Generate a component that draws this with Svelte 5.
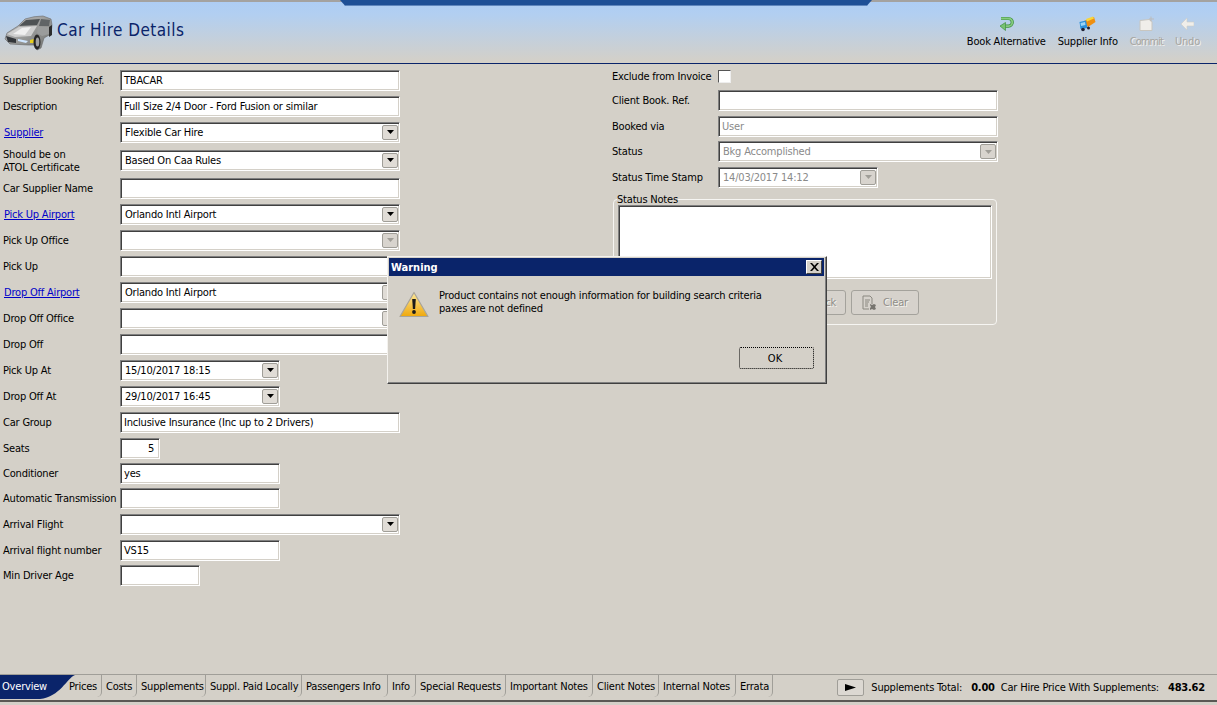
<script>
  const leftRows = [
    { label: 'Supplier Booking Ref.', value: 'TBACAR', size: 'full' },
    { label: 'Description', value: 'Full Size 2/4 Door - Ford Fusion or similar', size: 'full' },
    { label: 'Supplier', link: true, value: 'Flexible Car Hire', size: 'full', combo: true },
    { label: 'Should be on\nATOL Certificate', two: true, value: 'Based On Caa Rules', size: 'full', combo: true },
    { label: 'Car Supplier Name', value: '', size: 'full' },
    { label: 'Pick Up Airport', link: true, value: 'Orlando Intl Airport', size: 'full', combo: true },
    { label: 'Pick Up Office', value: '', size: 'full', combo: true, disabledBtn: true },
    { label: 'Pick Up', value: '', size: 'full' },
    { label: 'Drop Off Airport', link: true, value: 'Orlando Intl Airport', size: 'full', combo: true },
    { label: 'Drop Off Office', value: '', size: 'full', combo: true },
    { label: 'Drop Off', value: '', size: 'full' },
    { label: 'Pick Up At', value: '15/10/2017 18:15', size: 'mid', combo: true },
    { label: 'Drop Off At', value: '29/10/2017 16:45', size: 'mid', combo: true },
    { label: 'Car Group', value: 'Inclusive Insurance (Inc up to 2 Drivers)', size: 'full' },
    { label: 'Seats', value: '5', size: 'tiny', right: true },
    { label: 'Conditioner', value: 'yes', size: 'mid' },
    { label: 'Automatic Transmission', value: '', size: 'mid' },
    { label: 'Arrival Flight', value: '', size: 'full', combo: true },
    { label: 'Arrival flight number', value: 'VS15', size: 'mid' },
    { label: 'Min Driver Age', value: '', size: 'small' }
  ];
  const rightRows = [
    { label: 'Client Book. Ref.', value: '', size: 'full' },
    { label: 'Booked via', value: 'User', size: 'full', disabled: true },
    { label: 'Status', value: 'Bkg Accomplished', size: 'full', combo: true, disabled: true },
    { label: 'Status Time Stamp', value: '14/03/2017 14:12', size: 'mid', combo: true, disabled: true }
  ];
  const tabs = ['Prices', 'Costs', 'Supplements', 'Suppl. Paid Locally', 'Passengers Info', 'Info', 'Special Requests', 'Important Notes', 'Client Notes', 'Internal Notes', 'Errata'];
</script>

{#snippet field(r)}
  <div class="field {r.size}" class:dis={r.disabled}>
    <span class="val" class:right={r.right} class:cval={r.combo}>{r.value}</span>
    {#if r.combo}
      <span class="drop" class:off={r.disabled || r.disabledBtn}><svg width="7" height="4" viewBox="0 0 7 4"><path d="M0 0h7L3.5 4z" fill="currentColor" /></svg></span>
    {/if}
  </div>
{/snippet}

<div class="window">
  <header class="head">
    <div class="tabnotch"></div>
    <div class="brand">
      <svg class="car" width="50" height="36" viewBox="0 0 50 36">
        <defs>
          <linearGradient id="cb" x1="0" y1="0" x2="1" y2="1"><stop offset="0" stop-color="#c4c4c4" /><stop offset="1" stop-color="#6e706e" /></linearGradient>
        </defs>
        <path d="M1 24 L3 18 L14 11 L21 4 Q30 1 39 1 L47 4 L48 10 L47 19 L40 23 L37 33 L33 35 L30 30 L24 30 L6 29z" fill="url(#cb)" stroke="#666" stroke-width=".6" />
        <path d="M15 11 L22 5 L36 4 L33 10z" fill="#4e5254" />
        <path d="M37 4 L46 5 L45 11 L35 11z" fill="#606466" />
        <path d="M3 19 L15 12 L33 11 L27 21 L11 22z" fill="#cfcfcf" />
        <path d="M9 19 L18 13 L27 12 L21 20z" fill="#efefef" />
        <path d="M34 12 L46 12 L45 19 L38 21 L33 18z" fill="#9a9c9c" />
        <path d="M2 21 L12 24 L12 28 L4 27z" fill="#33363a" />
        <path d="M14 24 L24 26 L22 28 L14 26z" fill="#cfe6ff" />
        <path d="M26 25 L30 24 L30 28 L26 28z" fill="#e8d020" />
        <ellipse cx="33" cy="27" rx="3.5" ry="7.5" fill="#262626" />
        <ellipse cx="33.5" cy="27" rx="1.8" ry="4.5" fill="#a2a2a2" />
        <path d="M45 12 L48 10 L48 20 L45 22z" fill="#2c2c2c" />
      </svg>
      <h1>Car Hire Details</h1>
    </div>
    <div class="tools">
      <div class="tool">
        <svg width="16" height="16" viewBox="0 0 16 16">
          <path d="M3 2.5h7.5a3.8 3.8 0 0 1 0 7.6H6" fill="none" stroke="#3f8f3f" stroke-width="3.2" />
          <path d="M3 2.5h7.5a3.8 3.8 0 0 1 0 7.6H6" fill="none" stroke="#86cc80" stroke-width="1.8" />
          <path d="M7.5 6.5 L2 10 L7.5 14.5z" fill="#78c272" stroke="#3f8f3f" stroke-width=".7" />
        </svg>
        <span>Book Alternative</span>
      </div>
      <div class="tool">
        <svg width="17" height="16" viewBox="0 0 17 16">
          <path d="M5 5 L15 1 L16.5 6 L9 11z" fill="#ef8f10" />
          <path d="M7 3 L14 0.5 L15 2.5 L8 5.5z" fill="#f8d63c" />
          <path d="M0.5 6 L7 4.5 L8.5 12 L1.5 13z" fill="#2a8fd8" />
          <path d="M1.5 7 L6 6 L6.5 9 L2 10z" fill="#9ad4f5" />
          <circle cx="4" cy="13.5" r="1.8" fill="#223" />
          <circle cx="9.5" cy="12" r="1.5" fill="#223" />
        </svg>
        <span>Supplier Info</span>
      </div>
      <div class="tool off commit">
        <svg width="15" height="15" viewBox="0 0 15 15"><path d="M1 4 L10 3 L13 5 V14 H1z" fill="#f0eeea" stroke="#c8c6c0" /><path d="M12 0v5M10 2.5h5" stroke="#bbb" /></svg>
        <span>Commit</span>
      </div>
      <div class="tool off">
        <svg width="14" height="14" viewBox="0 0 14 14"><path d="M7 1 L1 7 L7 13 V9 H14 V5 H7z" fill="#f0eeea" stroke="#cfcdc7" stroke-width=".6" /></svg>
        <span>Undo</span>
      </div>
    </div>
  </header>

  <main class="body">
    <section class="left">
      {#each leftRows as r}
        <div class="row">
          {#if r.link}
            <a class="lbl link" href="#top">{r.label}</a>
          {:else}
            <span class="lbl" class:two={r.two}>{r.label}</span>
          {/if}
          {@render field(r)}
        </div>
      {/each}
    </section>

    <section class="right">
      <div class="rrows">
        <div class="row">
          <span class="lbl">Exclude from Invoice</span>
          <span class="check"></span>
        </div>
        {#each rightRows as r}
          <div class="row">
            <span class="lbl">{r.label}</span>
            {@render field(r)}
          </div>
        {/each}
      </div>
      <fieldset class="group">
        <legend>Status Notes</legend>
        <div class="notes"></div>
        <div class="btns">
          <button class="btn" disabled>Check</button>
          <button class="btn clear" disabled>
            <svg width="16" height="16" viewBox="0 0 16 16"><path d="M2 1h7l2 2v6M2 1v13h6" fill="none" stroke="#8a8880" /><path d="M4 5h5M4 7h4M4 9h3M4 11h3" stroke="#8a8880" /><path d="M9 9l2 1 2-1 2 1-1 2 1 2-2 1-2-1-2 1 0-2 1-1-1-2z" fill="#77756f" /></svg>
            <span>Clear</span>
          </button>
        </div>
      </fieldset>
    </section>
  </main>

  <footer class="foot">
    <nav class="tabs">
      <div class="tab active">
        <svg width="76" height="25" viewBox="0 0 76 25"><path d="M0 0H75C67 3 60 22 40 24H0z" fill="#0a246a" /></svg>
        <span>Overview</span>
      </div>
      {#each tabs as t}
        <div class="tab">{t}</div>
      {/each}
    </nav>
    <div class="totals">
      <button class="play" aria-label="Run"><svg width="11" height="7" viewBox="0 0 11 7"><path d="M0 0L11 3.5L0 7z" fill="#000" /></svg></button>
      <span class="t1">Supplements Total:</span>
      <b class="t2">0.00</b>
      <span class="t3">Car Hire Price With Supplements:</span>
      <b class="t4">483.62</b>
    </div>
  </footer>

  <div class="dialog" role="dialog">
    <div class="title">
      <span>Warning</span>
      <span class="x"><svg width="9" height="8" viewBox="0 0 9 8"><path d="M0 0h2l2.5 2.8L7 0h2L5.5 4 9 8H7L4.5 5.2 2 8H0l3.5-4z" fill="#000" /></svg></span>
    </div>
    <div class="msg">
      <svg width="30" height="28" viewBox="0 0 30 28">
        <defs><linearGradient id="wy" x1="0" y1="0" x2="0" y2="1"><stop offset="0" stop-color="#fde89a" /><stop offset="1" stop-color="#efa80c" /></linearGradient></defs>
        <path d="M15 1.5 L29 25.5 H1z" fill="url(#wy)" stroke="#a8a49a" stroke-width="1.2" stroke-linejoin="round" />
        <path d="M13.2 8h3.6l-.7 10h-2.2z" fill="#1a1a1a" />
        <circle cx="15" cy="21" r="1.9" fill="#1a1a1a" />
      </svg>
      <p>Product contains not enough information for building search criteria<br />paxes are not defined</p>
    </div>
    <div class="actions"><button class="ok">OK</button></div>
  </div>
</div>

<style>
  :global(body) { margin: 0; background: #d4d0c8; overflow: hidden; }
  .window {
    position: relative; width: 1217px; height: 705px; display: flex; flex-direction: column;
    background: #d4d0c8; font: 11px "DejaVu Sans Condensed", "DejaVu Sans", sans-serif; font-stretch: condensed; color: #000;
    letter-spacing: -.2px; overflow: hidden;
  }
  .head {
    position: relative; height: 61px; flex: none; display: flex; justify-content: space-between;
    border-top: 2px solid #a4a2a0; border-bottom: 1px solid #0a246a;
    background: linear-gradient(#aecdf4 0, #b2cff1 20%, #d4d0c8 98%);
  }
  .tabnotch {
    position: absolute; left: 340px; width: 532px; top: -2px; height: 5px;
    background: #1e4f96; border-bottom: 1px solid #5f86bd;
    clip-path: polygon(0 0, 100% 0, 99% 100%, 1% 100%);
  }
  .brand { display: flex; align-items: center; gap: 3px; padding-left: 4px; }
  h1 { margin: 0 0 6px; font-size: 17px; font-weight: 400; color: #0a246a; letter-spacing: .45px; }
  .tools { display: flex; gap: 12px; padding: 14px 17px 0 0; align-items: flex-start; }
  .tool { display: flex; flex-direction: column; align-items: center; gap: 3px; }
  .tool svg { height: 16px; }
  .tool.off span { color: #a6a49f; text-shadow: 1px 1px #f4f2ee; }
  .tool.commit { letter-spacing: -.95px; }

  .body { flex: 1; display: flex; padding-top: 3px; }
  .left {
    width: 612px; flex: none; display: grid; align-content: start;
    grid-template-rows: 26px 26px 26px 30px 26px 26px 26px 26px 26px 26px 26px 26px 26px 26px 26px 24px 26px 26px 26px 25px;
  }
  .right { flex: 1; display: flex; flex-direction: column; }
  .rrows { display: grid; grid-template-rows: 22px 27px 25px 25px 26px; margin-top: -2px; }
  .row { display: flex; align-items: center; }
  .lbl { white-space: pre-line; line-height: 13px; }
  .left .lbl { width: 120px; padding-left: 3px; box-sizing: border-box; flex: none; }
  .left .lbl.two { padding-top: 2px; }
  .right .lbl { width: 106px; flex: none; }
  .link { color: #0000c8; text-decoration: underline; padding-left: 4px !important; }
  .field {
    position: relative; box-sizing: border-box; height: 21px; display: flex; align-items: center;
    background: #fff; border: 1px solid; border-color: #808080 #fff #fff #808080;
    box-shadow: inset 1px 1px #404040, inset -1px -1px #d4d0c8;
  }
  .full { width: 280px; } .mid { width: 160px; } .small { width: 80px; } .tiny { width: 40px; }
  .val { padding-left: 3px; flex: 1; white-space: nowrap; }
  .val.cval { padding-left: 4px; }
  .val.right { text-align: right; padding-right: 5px; }
  .dis .val { color: #8a8a8a; }
  .drop {
    position: absolute; right: 1px; top: 2px; width: 16px; height: 15px; display: flex;
    align-items: center; justify-content: center; box-sizing: border-box;
    background: #e0dcd6; border: 1px solid #a09e98; border-radius: 2px; color: #000;
  }
  .drop.off { color: #a09e98; background: #d8d4ce; }
  .check {
    width: 13px; height: 13px; box-sizing: border-box; background: #fff; border: 1px solid;
    border-color: #555 #eee #eee #555;
  }

  .group {
    margin: 3px 0 0 1px; padding: 0 4px; width: 384px; height: 132px; box-sizing: border-box;
    border: 1px solid #f6f5f2; border-radius: 4px; position: relative;
  }
  legend { padding: 1px 0 0; margin-left: -1px; line-height: 11px; }
  .notes {
    height: 74px; background: #fff; border: 1px solid; box-sizing: border-box;
    border-color: #808080 #fff #fff #808080; box-shadow: inset 1px 1px #404040, inset -1px -1px #d4d0c8;
  }
  .btns { display: flex; gap: 5px; padding: 11px 0 0 153px; }
  .btn {
    height: 25px; width: 75px; font: inherit; font-stretch: condensed; letter-spacing: inherit; color: #8f8d88; background: #d6d2cc; padding: 0 9px 0 0;
    border: 1px solid #a4a29c; border-radius: 3px; display: flex; align-items: center; justify-content: flex-end; gap: 6px;
    text-shadow: 1px 1px #f4f2ee;
  }
  .btn.clear { width: 68px; justify-content: flex-start; padding: 0 0 0 9px; }

  .foot {
    height: 28px; flex: none; display: flex; justify-content: space-between; box-sizing: border-box;
    border-top: 1px solid #a09e98; border-bottom: 2px solid #5a5854; margin-bottom: 3px;
  }
  .tabs {
    display: grid; align-content: start;
    grid-template-columns: 65px 37px 35px 69px 96px 86px 28px 90px 87px 66px 77px 37px;
  }
  .tab {
    position: relative; padding: 0 0 0 4px; line-height: 23px; white-space: nowrap;
    border-right: 1px solid #a09e98; border-bottom-right-radius: 5px; height: 22px;
  }
  .tab.active { box-sizing: border-box; border: 0; padding: 0 0 0 2px; color: #fff; }
  .tab.active svg { position: absolute; left: 0; top: 0; }
  .tab.active span { position: relative; }
  .totals { display: flex; align-items: center; padding-right: 12px; height: 24px; }
  .play {
    width: 27px; height: 17px; padding: 0; margin-right: 7px; background: #dcd8d2; border: 1px solid #a09e98;
    border-radius: 2px; display: flex; align-items: center; justify-content: center;
  }
  .t2 { margin: 0 6px 0 9px; }
  .t4 { margin-left: 9px; }

  .dialog {
    position: absolute; left: 387px; top: 256px; width: 440px; height: 128px; box-sizing: border-box;
    background: #d4d0c8; border: 1px solid; border-color: #f4f2ee #404040 #404040 #f4f2ee;
    box-shadow: inset -1px -1px #808080; padding: 1px 2px 2px 1px;
    display: flex; flex-direction: column;
  }
  .title {
    height: 18px; flex: none; background: #0a246a; color: #fff; font-weight: 700; letter-spacing: 0;
    display: flex; align-items: center; justify-content: space-between; padding: 0 2px 0 2px;
  }
  .x {
    width: 16px; height: 14px; box-sizing: border-box; background: #d4d0c8; display: flex; align-items: center; justify-content: center;
    border: 1px solid; border-color: #fff #404040 #404040 #fff;
  }
  .msg { display: flex; gap: 10px; padding: 12px 0 0 10px; }
  .msg svg { margin-top: 3px; }
  .msg p { margin: 0; line-height: 13px; padding-top: 1px; }
  .actions { margin-top: auto; display: flex; justify-content: flex-end; padding: 0 10px 12px 0; }
  .ok {
    width: 75px; height: 22px; font: inherit; font-stretch: condensed; padding: 0 3px 0 0; background: #d4d0c8; color: #000;
    border: 1px dotted #000; border-radius: 2px;
  }
</style>
